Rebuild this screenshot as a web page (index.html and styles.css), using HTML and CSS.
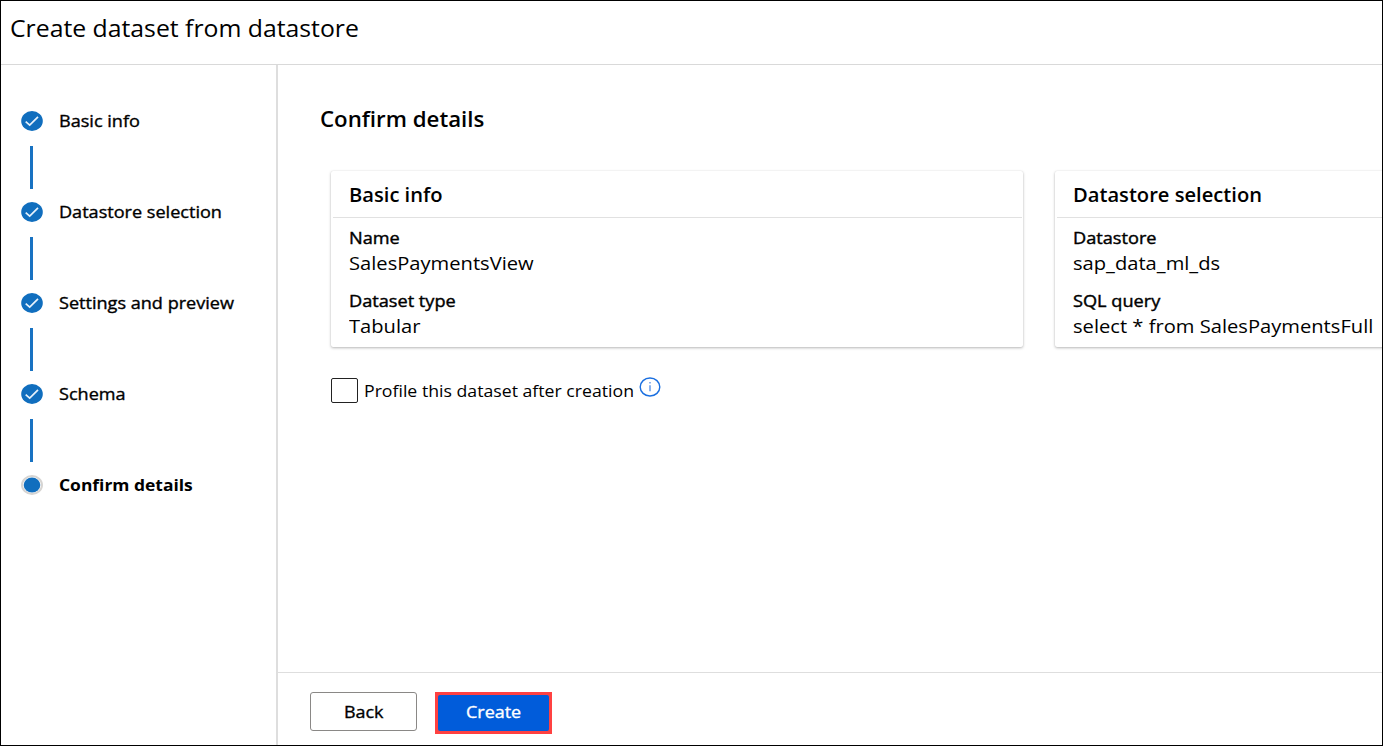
FILE: index.html
```
<!DOCTYPE html>
<html lang="en">
<head>
<meta charset="utf-8">
<title>Create dataset from datastore</title>
<link rel="stylesheet" href="styles.css">
</head>
<body>
<div class="window">
  <header class="header"><h1 class="title"><span>Create dataset from datastore</span></h1></header>
  <div class="body">
    <nav class="steps">
      <div class="step"><svg class="dot" viewBox="0 0 22 20"><ellipse cx="11" cy="10" rx="10.8" ry="10" fill="#106ebe"/><path d="M4.7 10.6l4 3.6 8.3-8.4" fill="none" stroke="#e6f1fb" stroke-width="1.7"/></svg><span class="step-label">Basic info</span></div>
      <div class="line"></div>
      <div class="step"><svg class="dot" viewBox="0 0 22 20"><ellipse cx="11" cy="10" rx="10.8" ry="10" fill="#106ebe"/><path d="M4.7 10.6l4 3.6 8.3-8.4" fill="none" stroke="#e6f1fb" stroke-width="1.7"/></svg><span class="step-label">Datastore selection</span></div>
      <div class="line"></div>
      <div class="step"><svg class="dot" viewBox="0 0 22 20"><ellipse cx="11" cy="10" rx="10.8" ry="10" fill="#106ebe"/><path d="M4.7 10.6l4 3.6 8.3-8.4" fill="none" stroke="#e6f1fb" stroke-width="1.7"/></svg><span class="step-label">Settings and preview</span></div>
      <div class="line"></div>
      <div class="step"><svg class="dot" viewBox="0 0 22 20"><ellipse cx="11" cy="10" rx="10.8" ry="10" fill="#106ebe"/><path d="M4.7 10.6l4 3.6 8.3-8.4" fill="none" stroke="#e6f1fb" stroke-width="1.7"/></svg><span class="step-label">Schema</span></div>
      <div class="line"></div>
      <div class="step"><svg class="dot" viewBox="0 0 22 20"><ellipse cx="11" cy="10" rx="10" ry="9" fill="#fff" stroke="#d6d4d2" stroke-width="2"/><ellipse cx="11" cy="10" rx="8.3" ry="7.6" fill="#106ebe"/></svg><span class="step-label current">Confirm details</span></div>
    </nav>
    <main class="main">
      <div class="content">
        <h2 class="heading"><span>Confirm details</span></h2>
        <div class="cards">
          <section class="card">
            <h3 class="card-title"><span>Basic info</span></h3>
            <dl class="fields">
              <dt><span>Name</span></dt><dd><span>SalesPaymentsView</span></dd>
              <dt><span>Dataset type</span></dt><dd><span>Tabular</span></dd>
            </dl>
          </section>
          <section class="card">
            <h3 class="card-title"><span>Datastore selection</span></h3>
            <dl class="fields">
              <dt><span>Datastore</span></dt><dd><span>sap_data_ml_ds</span></dd>
              <dt><span>SQL query</span></dt><dd><span>select * from SalesPaymentsFull</span></dd>
            </dl>
          </section>
        </div>
        <label class="profile">
          <span class="checkbox"></span>
          <span class="profile-text">Profile this dataset after creation</span>
          <svg class="info" viewBox="0 0 22 20"><ellipse cx="11" cy="10" rx="9.8" ry="9" fill="none" stroke="#1a6fe0" stroke-width="1.4"/><path d="M11 8.2v6M11 5v1.5" stroke="#5b93e8" stroke-width="1.4"/></svg>
        </label>
      </div>
      <footer class="footer">
        <button class="btn back"><span>Back</span></button>
        <div class="highlight"><button class="btn create"><span>Create</span></button></div>
      </footer>
    </main>
  </div>
</div>
</body>
</html>
```
FILE: styles.css
```
* { box-sizing: border-box; }
body { margin: 0; font-family: "Open Sans", "Noto Sans", sans-serif; color: #000; background: #fff; }
h1, h2, h3, dl, dd { margin: 0; }
/* Labels use a slightly extended letterform */
span { display: inline-block; white-space: nowrap; transform-origin: left center; }
.window { width: 1383px; height: 746px; border: 1px solid #000; display: flex; flex-direction: column; overflow: hidden; }
.header { height: 64px; flex: none; border-bottom: 1px solid #d9d9d9; padding: 11px 0 0 9px; }
.title { font-size: 23px; font-weight: 400; line-height: 32px; }
.title span { transform: scaleX(1.077); }
.body { flex: 1; display: flex; min-height: 0; }
.steps { width: 277px; flex: none; border-right: 2px solid #dedede; padding: 46px 0 0 19.5px; }
.step { height: 20px; display: flex; align-items: center; gap: 16px; }
.dot { width: 22px; height: 20px; flex: none; }
.step-label { font-size: 16px; font-weight: 400; -webkit-text-stroke: 0.35px; line-height: 20px; transform: scaleX(1.13); }
.current { font-weight: 700; -webkit-text-stroke: 0; transform: scaleX(1.09); }
.line { width: 3px; height: 43px; margin: 15px 0 13px 9px; background: #1872c2; }
.main { flex: 1; min-width: 0; display: flex; flex-direction: column; }
.content { flex: 1; overflow: hidden; padding: 40px 0 0 42px; }
.heading { font-size: 21px; font-weight: 600; line-height: 28px; }
.heading span { transform: scaleX(1.06); }
.cards { display: flex; gap: 32px; margin: 38px 0 0 11px; }
.card { width: 692px; height: 176px; flex: none; background: #fff; border-radius: 2px; box-shadow: 0 1px 3px rgba(0,0,0,.28), 0 0 1px rgba(0,0,0,.12); }
.card-title { height: 47px; margin: 0 1px 0 2px; padding: 10px 0 0 16px; border-bottom: 1px solid #e1e1e1; font-size: 19px; font-weight: 600; line-height: 28px; }
.card-title span { transform: scaleX(1.06); }
.fields { padding: 8px 0 0 18px; }
.fields dt { font-size: 16px; font-weight: 400; -webkit-text-stroke: 0.4px; line-height: 24px; }
.fields dt span { transform: scaleX(1.135); }
.fields dd { font-size: 19px; -webkit-text-stroke: 0; line-height: 25px; margin: 1px 0 13px; }
.fields dd span { transform: scaleX(1.06); }
.profile { display: flex; align-items: flex-start; margin: 31px 0 0 11px; }
.checkbox { width: 27px; height: 25px; border: 1px solid #222; border-radius: 2px; flex: none; }
.profile-text { width: 270px; font-size: 17px; line-height: 25px; margin-left: 6px; transform: scaleX(1.04); }
.info { width: 22px; height: 20px; margin: -1px 0 0 5px; }
.footer { height: 73px; flex: none; border-top: 1px solid #dedede; padding: 19px 0 0 32px; display: flex; align-items: flex-start; gap: 18px; }
.btn { font: 400 16px/20px "Open Sans", "Noto Sans", sans-serif; -webkit-text-stroke: 0.35px; padding: 0; }
.btn span { transform: scaleX(1.12); transform-origin: center; }
.back { width: 107px; height: 39px; border: 1px solid #8a8886; border-radius: 3px; background: #fff; color: #000; }
.highlight { border: 3px solid #ff4141; background: #ff4141; width: 117px; height: 42px; }
.create { width: 111px; height: 36px; border: 0; border-radius: 2px; background: #015cda; color: #fff; display: block; padding-bottom: 2px; }
```
